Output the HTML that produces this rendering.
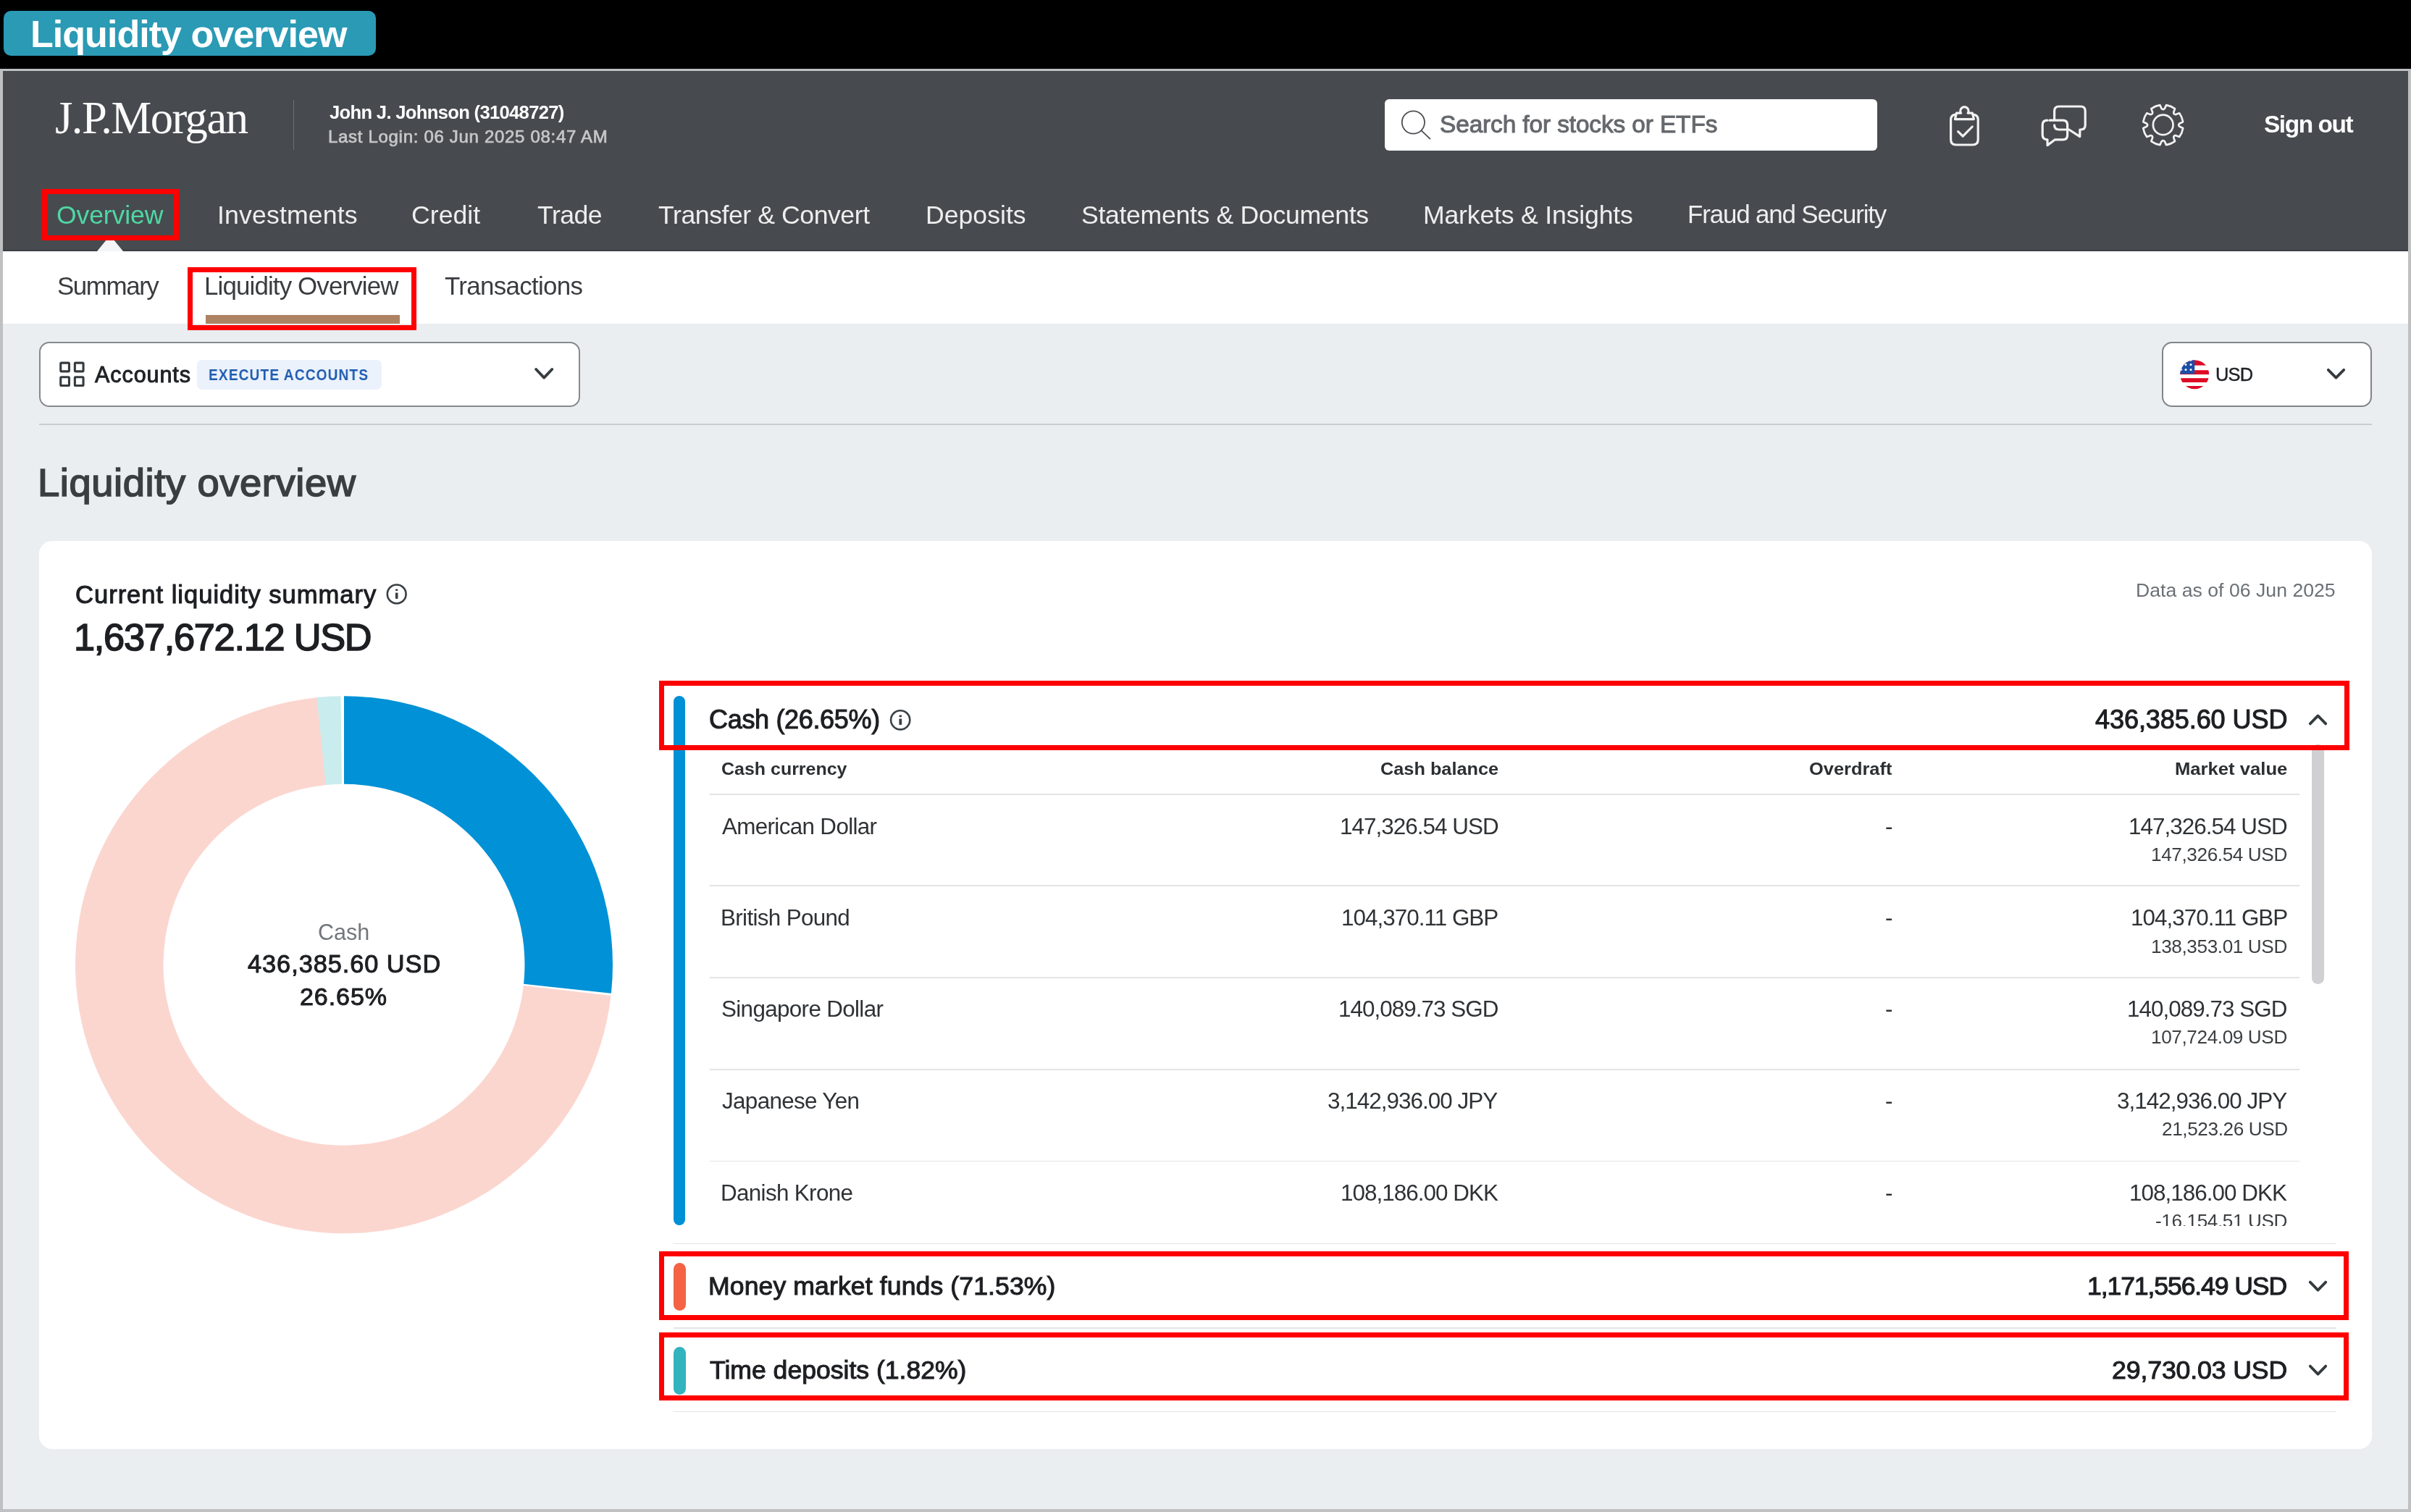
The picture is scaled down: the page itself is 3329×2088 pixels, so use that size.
<!DOCTYPE html>
<html><head><meta charset="utf-8"><title>Liquidity overview</title>
<style>
html,body{margin:0;padding:0;}
body{width:3329px;height:2088px;position:relative;overflow:hidden;background:#000;font-family:"Liberation Sans", sans-serif;}
.abs{position:absolute;}
.t{position:absolute;white-space:nowrap;z-index:5;will-change:transform;}
svg{overflow:visible}
</style></head><body>
<div class="abs" style="left:0px;top:0px;width:3329px;height:94.5px;background:#000000;z-index:0;"></div>
<div class="abs" style="left:5px;top:15px;width:514px;height:62px;background:#2a9ab5;z-index:2;border-radius:10px;"></div>
<div class="abs" style="left:0px;top:94.5px;width:3329px;height:1993.5px;background:#bfc0c1;z-index:0;"></div>
<div class="abs" style="left:4px;top:98px;width:3321px;height:249px;background:#474b4f;z-index:1;"></div>
<div class="abs" style="left:4px;top:347px;width:3321px;height:100px;background:#ffffff;z-index:1;"></div>
<div class="abs" style="left:4px;top:447px;width:3321px;height:1637px;background:#eaeef1;z-index:1;"></div>
<div class="abs" style="left:404.6px;top:138px;width:1.7999999999999545px;height:69px;background:#6c7074;z-index:2;"></div>
<div class="abs" style="left:1911.5px;top:137.2px;width:680.5px;height:71.30000000000001px;background:#ffffff;z-index:2;border-radius:6px;"></div>
<div class="abs" style="left:4px;top:345.4px;width:3321px;height:1.6000000000000227px;background:#3c4044;z-index:1;"></div>
<div class="abs" style="left:134.4px;top:325px;width:0;height:0;border-left:18.9px solid transparent;border-right:18.9px solid transparent;border-bottom:22px solid #f3f5f6;z-index:2"></div>
<div class="abs" style="left:284.4px;top:434.5px;width:267.30000000000007px;height:12.0px;background:#ad8262;z-index:2;"></div>
<div class="abs" style="left:54px;top:471.6px;width:746.5px;height:90.39999999999998px;background:#ffffff;z-index:2;border:2px solid #868a8e;box-sizing:border-box;border-radius:14px;"></div>
<div class="abs" style="left:271.6px;top:496.5px;width:255.10000000000002px;height:41.5px;background:#ebf2fc;z-index:3;border-radius:7px;"></div>
<div class="abs" style="left:2985px;top:471.6px;width:290px;height:90.89999999999998px;background:#ffffff;z-index:2;border:2px solid #808488;box-sizing:border-box;border-radius:14px;"></div>
<div class="abs" style="left:54px;top:585.3px;width:3221px;height:2.0px;background:#c9cdd1;z-index:2;"></div>
<div class="abs" style="left:53.7px;top:747px;width:3221.5px;height:1254.2px;background:#ffffff;z-index:2;border-radius:18px;"></div>
<div class="abs" style="left:929.8px;top:961px;width:16.700000000000045px;height:731.3px;background:#0090d6;z-index:3;border-radius:8.5px;"></div>
<div class="abs" style="left:929.8px;top:1743.6px;width:16.800000000000068px;height:66.20000000000005px;background:#f36344;z-index:3;border-radius:8.5px;"></div>
<div class="abs" style="left:929.8px;top:1859.7px;width:16.800000000000068px;height:66.20000000000005px;background:#33b3bd;z-index:3;border-radius:8.5px;"></div>
<div class="abs" style="left:0;top:0;width:3329px;height:1693px;overflow:hidden;z-index:4"><div class="abs" style="left:979.6px;top:1096.4px;width:2195.9px;height:1.599999999999909px;background:#e3e4e6;z-index:3;"></div><div class="abs" style="left:979.6px;top:1222.4px;width:2195.9px;height:1.599999999999909px;background:#e3e4e6;z-index:3;"></div><div class="abs" style="left:979.6px;top:1349.2px;width:2195.9px;height:1.599999999999909px;background:#e3e4e6;z-index:3;"></div><div class="abs" style="left:979.6px;top:1476.0px;width:2195.9px;height:1.599999999999909px;background:#e3e4e6;z-index:3;"></div><div class="abs" style="left:979.6px;top:1602.9px;width:2195.9px;height:1.599999999999909px;background:#e3e4e6;z-index:3;"></div><div class="t" style="left:996.22px;top:1050.65px;font-size:23.56px;line-height:23.56px;letter-spacing:0.000px;color:#2c2f32;transform:scaleX(1.0605);transform-origin:0 0;font-weight:700;">Cash currency</div><div class="t" style="left:1905.71px;top:1050.65px;font-size:23.56px;line-height:23.56px;letter-spacing:0.000px;color:#2c2f32;transform:scaleX(1.0744);transform-origin:0 0;font-weight:700;">Cash balance</div><div class="t" style="left:2498.41px;top:1050.65px;font-size:23.56px;line-height:23.56px;letter-spacing:0.000px;color:#2c2f32;transform:scaleX(1.0787);transform-origin:0 0;font-weight:700;">Overdraft</div><div class="t" style="left:3003.20px;top:1050.65px;font-size:23.56px;line-height:23.56px;letter-spacing:0.000px;color:#2c2f32;transform:scaleX(1.0888);transform-origin:0 0;font-weight:700;">Market value</div><div class="t" style="left:997.00px;top:1125.60px;font-size:31.42px;line-height:31.42px;letter-spacing:-0.667px;color:#2f3235;">American Dollar</div><div class="t" style="left:1849.74px;top:1125.60px;font-size:31.42px;line-height:31.42px;letter-spacing:-0.973px;color:#2f3235;">147,326.54 USD</div><div class="t" style="left:2603.37px;top:1125.60px;font-size:31.42px;line-height:31.42px;letter-spacing:-0.667px;color:#2f3235;">-</div><div class="t" style="left:2939.24px;top:1125.60px;font-size:31.42px;line-height:31.42px;letter-spacing:-0.973px;color:#2f3235;">147,326.54 USD</div><div class="t" style="left:2970.36px;top:1167.04px;font-size:26.18px;line-height:26.18px;letter-spacing:-0.403px;color:#3c3f42;">147,326.54 USD</div><div class="t" style="left:994.55px;top:1252.10px;font-size:31.42px;line-height:31.42px;letter-spacing:-0.667px;color:#2f3235;">British Pound</div><div class="t" style="left:1852.28px;top:1252.10px;font-size:31.42px;line-height:31.42px;letter-spacing:-0.973px;color:#2f3235;">104,370.11 GBP</div><div class="t" style="left:2603.37px;top:1252.10px;font-size:31.42px;line-height:31.42px;letter-spacing:-0.667px;color:#2f3235;">-</div><div class="t" style="left:2941.78px;top:1252.10px;font-size:31.42px;line-height:31.42px;letter-spacing:-0.973px;color:#2f3235;">104,370.11 GBP</div><div class="t" style="left:2970.36px;top:1293.54px;font-size:26.18px;line-height:26.18px;letter-spacing:-0.403px;color:#3c3f42;">138,353.01 USD</div><div class="t" style="left:996.02px;top:1378.00px;font-size:31.42px;line-height:31.42px;letter-spacing:-0.667px;color:#2f3235;">Singapore Dollar</div><div class="t" style="left:1847.99px;top:1378.00px;font-size:31.42px;line-height:31.42px;letter-spacing:-0.973px;color:#2f3235;">140,089.73 SGD</div><div class="t" style="left:2603.37px;top:1378.00px;font-size:31.42px;line-height:31.42px;letter-spacing:-0.667px;color:#2f3235;">-</div><div class="t" style="left:2937.49px;top:1378.00px;font-size:31.42px;line-height:31.42px;letter-spacing:-0.973px;color:#2f3235;">140,089.73 SGD</div><div class="t" style="left:2970.36px;top:1419.44px;font-size:26.18px;line-height:26.18px;letter-spacing:-0.403px;color:#3c3f42;">107,724.09 USD</div><div class="t" style="left:996.51px;top:1505.00px;font-size:31.42px;line-height:31.42px;letter-spacing:-0.667px;color:#2f3235;">Japanese Yen</div><div class="t" style="left:1833.44px;top:1505.00px;font-size:31.42px;line-height:31.42px;letter-spacing:-0.973px;color:#2f3235;">3,142,936.00 JPY</div><div class="t" style="left:2603.37px;top:1505.00px;font-size:31.42px;line-height:31.42px;letter-spacing:-0.667px;color:#2f3235;">-</div><div class="t" style="left:2922.94px;top:1505.00px;font-size:31.42px;line-height:31.42px;letter-spacing:-0.973px;color:#2f3235;">3,142,936.00 JPY</div><div class="t" style="left:2984.52px;top:1546.44px;font-size:26.18px;line-height:26.18px;letter-spacing:-0.403px;color:#3c3f42;">21,523.26 USD</div><div class="t" style="left:994.55px;top:1631.90px;font-size:31.42px;line-height:31.42px;letter-spacing:-0.667px;color:#2f3235;">Danish Krone</div><div class="t" style="left:1850.72px;top:1631.90px;font-size:31.42px;line-height:31.42px;letter-spacing:-0.973px;color:#2f3235;">108,186.00 DKK</div><div class="t" style="left:2603.37px;top:1631.90px;font-size:31.42px;line-height:31.42px;letter-spacing:-0.667px;color:#2f3235;">-</div><div class="t" style="left:2940.22px;top:1631.90px;font-size:31.42px;line-height:31.42px;letter-spacing:-0.973px;color:#2f3235;">108,186.00 DKK</div><div class="t" style="left:2976.21px;top:1673.34px;font-size:26.18px;line-height:26.18px;letter-spacing:-0.403px;color:#3c3f42;">-16,154.51 USD</div></div>
<div class="abs" style="left:3192.4px;top:1028px;width:16.40000000000009px;height:331px;background:#d0d0d3;z-index:4;border-radius:8.2px;"></div>
<div class="abs" style="left:930px;top:1716.6000000000001px;width:2295.5px;height:1.599999999999909px;background:#e3e4e6;z-index:3;"></div>
<div class="abs" style="left:930px;top:1833.2px;width:2295.5px;height:1.599999999999909px;background:#e3e4e6;z-index:3;"></div>
<div class="abs" style="left:930px;top:1948.7px;width:2295.5px;height:1.599999999999909px;background:#e3e4e6;z-index:3;"></div>
<svg class="abs" width="3329" height="2088" viewBox="0 0 3329 2088" style="left:0;top:0;z-index:6">
<!-- search icon -->
<circle cx="1951.4" cy="169" r="15.6" fill="none" stroke="#4b4e52" stroke-width="1.8"/>
<line x1="1962.6" y1="180.4" x2="1974.5" y2="191.6" stroke="#4b4e52" stroke-width="1.8" stroke-linecap="round"/>
<!-- clipboard -->
<g fill="none" stroke="#f2f2f2" stroke-width="3.2" stroke-linejoin="round" stroke-linecap="round">
<path d="M2700.6 158.2 Q2693.6 158.6 2693.6 165.5 V192.8 Q2693.6 200 2700.8 200 H2723.8 Q2731.2 200 2731.2 192.8 V165.5 Q2731.2 158.6 2724.2 158.2"/>
<path d="M2699.4 164.6 H2725.4 L2723.4 156.2 H2717.2 A5.6 5.6 0 1 0 2707.6 156.2 H2701.4 Z"/>
<path d="M2703.6 181.6 L2710.2 188.2 L2723.2 175"/>
<!-- chat -->
<path d="M2836.6 165 V153.4 Q2836.6 147 2843 147 H2873 Q2879.2 147 2879.2 153.4 V172.8 Q2879.2 179 2873 179 H2871.8 V188.6 L2856.8 179 H2843 Q2836.6 179 2836.6 172.8"/>
<path d="M2830 166.2 H2848.2 Q2854.6 166.2 2854.6 172.6 V186.4 Q2854.6 192.8 2848.2 192.8 H2837.5 L2827 200.6 V192.8 Q2820.2 192.6 2820.2 186.2 V172.8 Q2820.2 166.2 2826.8 166.2"/>
</g>
<!-- gear -->
<g fill="none" stroke="#f2f2f2" stroke-width="2.7" stroke-linejoin="round">
<path d="M2982.35 145.14 L2984.51 149.81 Q2986.70 152.40 2988.89 149.81 L2991.05 145.14 A27.8 27.8 0 0 1 3003.04 150.11 L3001.27 154.93 Q3000.98 158.32 3004.37 158.03 L3009.19 156.26 A27.8 27.8 0 0 1 3014.16 168.25 L3009.49 170.41 Q3006.90 172.60 3009.49 174.79 L3014.16 176.95 A27.8 27.8 0 0 1 3009.19 188.94 L3004.37 187.17 Q3000.98 186.88 3001.27 190.27 L3003.04 195.09 A27.8 27.8 0 0 1 2991.05 200.06 L2988.89 195.39 Q2986.70 192.80 2984.51 195.39 L2982.35 200.06 A27.8 27.8 0 0 1 2970.36 195.09 L2972.13 190.27 Q2972.42 186.88 2969.03 187.17 L2964.21 188.94 A27.8 27.8 0 0 1 2959.24 176.95 L2963.91 174.79 Q2966.50 172.60 2963.91 170.41 L2959.24 168.25 A27.8 27.8 0 0 1 2964.21 156.26 L2969.03 158.03 Q2972.42 158.32 2972.13 154.93 L2970.36 150.11 A27.8 27.8 0 0 1 2982.35 145.14 Z"/>
<circle cx="2986.7" cy="172.4" r="13.8"/>
</g>
<!-- accounts grid icon -->
<g fill="none" stroke="#363b3f" stroke-width="3.1">
<rect x="83.75" y="501.15" width="11.7" height="11.7" rx="1"/><rect x="103.35" y="501.15" width="11.7" height="11.7" rx="1"/>
<rect x="83.75" y="520.75" width="11.7" height="11.7" rx="1"/><rect x="103.35" y="520.75" width="11.7" height="11.7" rx="1"/>
</g>
<g fill="none" stroke="#353c40" stroke-width="3.8" stroke-linecap="round" stroke-linejoin="round">
<polyline points="740.2,510 751.2,521.6 762.2,510"/>
<polyline points="3214.8,510.8 3225.5,521.6 3236.2,510.8"/>
<polyline points="3189.8,999.4 3200.5,988.4 3211.2,999.4"/>
<polyline points="3189.8,1770.6 3200.5,1781.6 3211.2,1770.6"/>
<polyline points="3189.8,1886.6 3200.5,1897.6 3211.2,1886.6"/>
</g>
<!-- info icons -->
<g fill="none" stroke="#394045" stroke-width="2.6">
<circle cx="547.7" cy="820.4" r="12.9"/>
<circle cx="1243.2" cy="994.3" r="13.1"/>
</g>
<g fill="#394045">
<rect x="545.9" y="813.4" width="3.6" height="2.6" rx="1.2"/><rect x="545.9" y="818.5" width="3.6" height="8.4" rx="0.8"/>
<rect x="1241.4" y="987.6" width="3.8" height="2.7" rx="1.2"/><rect x="1241.4" y="992.6" width="3.8" height="8.5" rx="0.8"/>
</g>
<!-- flag -->
<defs><clipPath id="fc"><circle cx="3030.2" cy="517.2" r="20"/></clipPath></defs>
<g clip-path="url(#fc)">
<rect x="3008" y="495" width="45" height="45" fill="#ffffff"/>
<rect x="3008" y="494" width="45" height="10.6" fill="#de0a26"/>
<rect x="3008" y="511.2" width="45" height="5.9" fill="#de0a26"/>
<rect x="3008" y="522.2" width="45" height="5.8" fill="#de0a26"/>
<rect x="3008" y="533" width="45" height="7" fill="#de0a26"/>
<rect x="3008" y="494" width="22.2" height="22.4" fill="#1c4fa5"/>
<g fill="#fff"><circle cx="3018" cy="503.5" r="1.5"/><circle cx="3025" cy="503.5" r="1.5"/><circle cx="3018" cy="510.5" r="1.5"/><circle cx="3025" cy="510.5" r="1.5"/><circle cx="3025" cy="497.5" r="1.3"/><circle cx="3018.5" cy="497.8" r="1.1"/><circle cx="3012" cy="510.5" r="1.3"/></g>
</g>
<!-- donut -->
<path d="M475.00 961.30 A371 371 0 0 1 843.90 1371.72 L723.09 1358.81 A249.5 249.5 0 0 0 475.00 1082.80 Z" fill="#0091d6"/><path d="M843.54 1374.94 A371 371 0 1 1 438.15 963.13 L450.22 1084.03 A249.5 249.5 0 1 0 722.85 1360.98 Z" fill="#fbd6cf"/><path d="M437.51 963.20 A371 371 0 0 1 470.47 961.33 L471.95 1082.82 A249.5 249.5 0 0 0 449.79 1084.08 Z" fill="#c9ecee"/>
</svg>
<div class="t" style="left:42.25px;top:21.12px;font-size:52.07px;line-height:52.07px;letter-spacing:-0.983px;color:#ffffff;font-weight:700;">Liquidity overview</div>
<div class="t" style="left:76.02px;top:131.71px;font-size:62.60px;line-height:62.60px;letter-spacing:-1.511px;color:#fafafa;font-family:'Liberation Serif', serif;">J.P.Morgan</div>
<div class="t" style="left:455.00px;top:142.63px;font-size:25.60px;line-height:25.60px;letter-spacing:-0.681px;color:#ffffff;font-weight:700;">John J. Johnson (31048727)</div>
<div class="t" style="left:453.12px;top:177.18px;font-size:24.00px;line-height:24.00px;letter-spacing:0.693px;color:#c6c7c8;-webkit-text-stroke:0.72px #c6c7c8;">Last Login: 06 Jun 2025 08:47 AM</div>
<div class="t" style="left:1988.45px;top:154.68px;font-size:33.45px;line-height:33.45px;letter-spacing:-0.129px;color:#65686c;-webkit-text-stroke:1.00px #65686c;">Search for stocks or ETFs</div>
<div class="t" style="left:3126.48px;top:154.58px;font-size:33.45px;line-height:33.45px;letter-spacing:-1.443px;color:#ffffff;font-weight:700;">Sign out</div>
<div class="t" style="left:78.33px;top:279.53px;font-size:35.64px;line-height:35.64px;letter-spacing:-0.154px;color:#4fd8a4;">Overview</div>
<div class="t" style="left:300.22px;top:279.53px;font-size:35.64px;line-height:35.64px;letter-spacing:0.148px;color:#eeeeee;">Investments</div>
<div class="t" style="left:568.33px;top:279.53px;font-size:35.64px;line-height:35.64px;letter-spacing:0.038px;color:#eeeeee;">Credit</div>
<div class="t" style="left:742.24px;top:279.53px;font-size:35.64px;line-height:35.64px;letter-spacing:-0.517px;color:#eeeeee;">Trade</div>
<div class="t" style="left:909.04px;top:280.13px;font-size:35.64px;line-height:35.64px;letter-spacing:-0.445px;color:#eeeeee;">Transfer &amp; Convert</div>
<div class="t" style="left:1277.92px;top:280.13px;font-size:35.64px;line-height:35.64px;letter-spacing:0.007px;color:#eeeeee;">Deposits</div>
<div class="t" style="left:1492.89px;top:280.13px;font-size:35.64px;line-height:35.64px;letter-spacing:-0.325px;color:#eeeeee;">Statements &amp; Documents</div>
<div class="t" style="left:1965.22px;top:280.13px;font-size:35.64px;line-height:35.64px;letter-spacing:-0.189px;color:#eeeeee;">Markets &amp; Insights</div>
<div class="t" style="left:2329.67px;top:278.95px;font-size:34.91px;line-height:34.91px;letter-spacing:-1.154px;color:#eeeeee;">Fraud and Security</div>
<div class="t" style="left:78.91px;top:377.55px;font-size:34.91px;line-height:34.91px;letter-spacing:-1.427px;color:#3a3c3f;">Summary</div>
<div class="t" style="left:281.67px;top:377.55px;font-size:34.91px;line-height:34.91px;letter-spacing:-0.868px;color:#3a3c3f;">Liquidity Overview</div>
<div class="t" style="left:614.45px;top:377.55px;font-size:34.91px;line-height:34.91px;letter-spacing:-0.683px;color:#3a3c3f;">Transactions</div>
<div class="t" style="left:130.60px;top:502.14px;font-size:30.55px;line-height:30.55px;letter-spacing:0.902px;color:#202326;-webkit-text-stroke:0.92px #202326;">Accounts</div>
<div class="t" style="left:288.41px;top:506.78px;font-size:22.11px;line-height:22.11px;letter-spacing:1.327px;color:#1f5bb0;transform:scaleX(0.8629);transform-origin:0 0;font-weight:700;">EXECUTE ACCOUNTS</div>
<div class="t" style="left:3059.41px;top:504.75px;font-size:25.45px;line-height:25.45px;letter-spacing:-0.785px;color:#202326;-webkit-text-stroke:0.41px #202326;">USD</div>
<div class="t" style="left:51.95px;top:639.95px;font-size:54.40px;line-height:54.40px;letter-spacing:0.572px;color:#3b3e41;-webkit-text-stroke:1.63px #3b3e41;">Liquidity overview</div>
<div class="t" style="left:103.58px;top:803.50px;font-size:34.62px;line-height:34.62px;letter-spacing:0.957px;color:#1c1e21;-webkit-text-stroke:1.04px #1c1e21;">Current liquidity summary</div>
<div class="t" style="left:101.73px;top:854.37px;font-size:52.36px;line-height:52.36px;letter-spacing:-1.277px;color:#1d1f22;-webkit-text-stroke:1.57px #1d1f22;">1,637,672.12 USD</div>
<div class="t" style="left:2949.12px;top:801.57px;font-size:26.62px;line-height:26.62px;letter-spacing:0.024px;color:#6b7075;">Data as of 06 Jun 2025</div>
<div class="t" style="left:439.49px;top:1271.84px;font-size:30.55px;line-height:30.55px;letter-spacing:0.000px;color:#73777b;">Cash</div>
<div class="t" style="left:342.46px;top:1313.94px;font-size:34.33px;line-height:34.33px;letter-spacing:0.955px;color:#1d1f22;-webkit-text-stroke:1.03px #1d1f22;">436,385.60 USD</div>
<div class="t" style="left:414.40px;top:1359.39px;font-size:34.04px;line-height:34.04px;letter-spacing:0.914px;color:#1d1f22;-webkit-text-stroke:1.02px #1d1f22;">26.65%</div>
<div class="t" style="left:979.11px;top:976.46px;font-size:36.07px;line-height:36.07px;letter-spacing:-0.362px;color:#1d1f22;-webkit-text-stroke:1.08px #1d1f22;">Cash (26.65%)</div>
<div class="t" style="left:2892.74px;top:976.46px;font-size:36.07px;line-height:36.07px;letter-spacing:-0.093px;color:#1d1f22;-webkit-text-stroke:1.08px #1d1f22;">436,385.60 USD</div>
<div class="t" style="left:977.82px;top:1758.63px;font-size:35.64px;line-height:35.64px;letter-spacing:0.088px;color:#1d1f22;-webkit-text-stroke:1.07px #1d1f22;">Money market funds (71.53%)</div>
<div class="t" style="left:2881.97px;top:1759.13px;font-size:35.64px;line-height:35.64px;letter-spacing:-1.130px;color:#1d1f22;-webkit-text-stroke:1.07px #1d1f22;">1,171,556.49 USD</div>
<div class="t" style="left:980.04px;top:1875.13px;font-size:35.64px;line-height:35.64px;letter-spacing:-0.029px;color:#1d1f22;-webkit-text-stroke:1.07px #1d1f22;">Time deposits (1.82%)</div>
<div class="t" style="left:2915.93px;top:1875.13px;font-size:35.64px;line-height:35.64px;letter-spacing:-0.114px;color:#1d1f22;-webkit-text-stroke:1.07px #1d1f22;">29,730.03 USD</div>
<div class="abs" style="left:57.9px;top:260.9px;width:189.0px;height:70.90000000000003px;border:7px solid #ff0000;box-sizing:border-box;z-index:30"></div>
<div class="abs" style="left:259px;top:369px;width:315.79999999999995px;height:87px;border:7px solid #ff0000;box-sizing:border-box;z-index:30"></div>
<div class="abs" style="left:909.9px;top:939.9px;width:2333.7999999999997px;height:95.80000000000007px;border:7px solid #ff0000;box-sizing:border-box;z-index:30"></div>
<div class="abs" style="left:909.7px;top:1728.2px;width:2333.8px;height:94.39999999999986px;border:7px solid #ff0000;box-sizing:border-box;z-index:30"></div>
<div class="abs" style="left:909.7px;top:1840.4px;width:2333.8px;height:93.79999999999995px;border:7px solid #ff0000;box-sizing:border-box;z-index:30"></div>

</body></html>
